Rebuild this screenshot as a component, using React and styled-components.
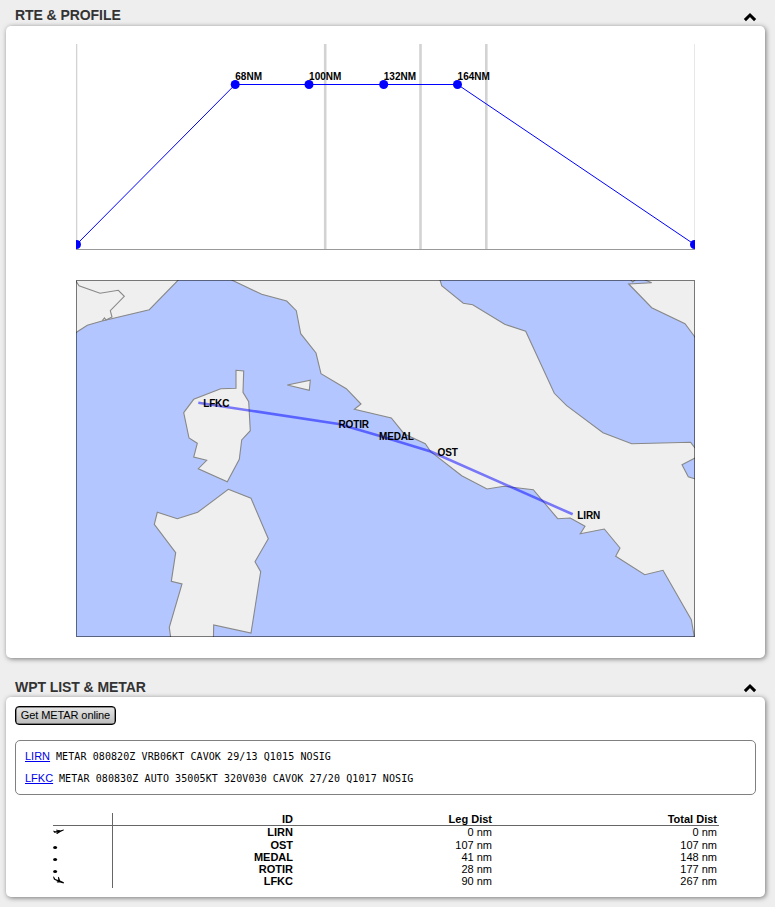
import React from "react";
import styled, { createGlobalStyle } from "styled-components";

const GlobalStyle = createGlobalStyle`
  * { box-sizing: border-box; }
  html, body { margin: 0; background: #eeeeee; }
  body {
    font-family: "Liberation Sans", Arial, sans-serif;
    font-size: 11px;
    color: #000;
  }
`;

const Page = styled.main`
  width: 775px;
  height: 907px;
  padding: 4px 10px 0 6px;
  overflow: hidden;
`;

const Section = styled.section`
  margin-bottom: ${(p) => p.$gap || 0}px;
`;

const SectionHeader = styled.header`
  display: flex;
  justify-content: space-between;
  align-items: center;
  height: ${(p) => p.$height}px;
  padding: 0 8px 0 9px;
`;

const Title = styled.h2`
  margin: 0;
  font-size: 14px;
  line-height: 16px;
  font-weight: bold;
  letter-spacing: -0.07px;
  color: #333;
`;

const Chevron = styled.svg`
  display: block;
  width: 14px;
  height: 10px;
  margin-top: 3px;
`;

const Card = styled.div`
  height: ${(p) => p.$height}px;
  padding: ${(p) => p.$padding};
  background: #fff;
  border-radius: 5px;
  box-shadow: 1px 1px 5px rgba(0, 0, 0, 0.5);
`;

const ProfileChart = styled.svg`
  display: block;
  width: 619px;
  height: 206px;
  margin-bottom: 30px;
`;

const RouteMap = styled.svg`
  display: block;
  width: 619px;
  height: 357px;
`;

const ChartLabel = styled.text`
  font: bold 10px "Liberation Sans", Arial, sans-serif;
  letter-spacing: ${(p) => p.$spacing || 0}px;
  fill: #000;
`;

const MetarButton = styled.button`
  display: block;
  width: 101px;
  height: 19px;
  padding: 1px 0;
  border: 1px solid #000;
  border-radius: 4px;
  background: linear-gradient(#e6e6e6, #bdbdbd);
  box-shadow: inset 0 0 0 0.5px #333;
  font: 11px/15px "Liberation Sans", Arial, sans-serif;
  letter-spacing: -0.1px;
  color: #000;
`;

const MetarBox = styled.div`
  height: 55px;
  margin: 15px 0 18px;
  padding: 4px 9px;
  border: 1px solid #808080;
  border-radius: 5px;
`;

const MetarLine = styled.p`
  margin: 0;
  height: 22px;
  line-height: 22px;
  white-space: pre;
`;

const StationLink = styled.a`
  display: inline-block;
  width: ${(p) => p.$width}px;
  color: #0000ee;
  text-decoration: underline;
`;

const MetarText = styled.code`
  margin-left: 6px;
  font: 10px "DejaVu Sans Mono", monospace;
  letter-spacing: 0.09px;
`;

const WaypointTable = styled.div`
  width: 666px;
  margin-left: 38px;
`;

const WaypointRow = styled.div`
  display: grid;
  grid-template-columns: 60px 182px 199px 225px;
  height: ${(p) => p.$height}px;
  line-height: 12px;
  border-bottom: ${(p) => (p.$head ? "1px solid #666" : "none")};
  font-weight: ${(p) => (p.$head ? "bold" : "normal")};
`;

const Cell = styled.div`
  padding-right: 2px;
  text-align: right;
  font-weight: ${(p) => (p.$bold ? "bold" : "inherit")};
`;

const IconCell = styled.div`
  border-right: 1px solid #666;
`;

const Marker = styled.svg`
  display: block;
  width: 12px;
  height: 12px;
`;

const points = [
  [0.5, 200.5],
  [159.2, 40.5, "68NM"],
  [233, 40.5, "100NM"],
  [307.7, 40.5, "132NM"],
  [381.5, 40.5, "164NM"],
  [618.5, 200.5],
];

const land = [
  "70,336 76.5,332.3 87.3,325.3 102,321 149.3,309.7 178.3,280 178.3,270 70,270",
  "231.7,280 261.7,294.3 286.7,301 296.3,310.7 300.7,333.7 316,353 321,373.7 346.3,388.7 361,404 354.3,409.3 391.3,418 404,433.7 425.3,443.7 430.7,451.7 461.7,475.7 487,489 504,486.3 533.3,489.7 557.7,518.7 570.3,518 585,526.3 580.3,533.7 604.3,529 620,548 615.7,556.3 644.7,574.7 663,570.3 691.3,619.7 694.3,637 700,650 705,481 694.5,478.7 688.3,476.7 682,464.7 694.5,458.3 705,455 694.7,447.7 690.7,442.3 631.7,443.7 603,432.7 566.7,405.7 554.3,393.3 525.7,331.3 504.7,324.3 472.7,304.7 463.3,303.3 441.7,285.7 440,280 440,270 231.7,270",
  "287.3,385 310.3,380.3 309.3,390.3",
  "236,370.3 243.7,371 243,392.3 248.7,401.7 250.3,430.7 241.7,440 239.3,459.3 227.3,481.7 198.3,468.7 206.7,460.3 193.7,457 197.3,443.3 189,438 183.7,412.7 193.7,399.3 220.7,388.7 236,388.3",
  "228.3,489.3 251,498.3 268.3,538.7 255,561.7 260.7,571.7 251,633 213.7,625 213.3,645 171.7,645 169.3,627.3 182,584 171.3,581.3 175.7,552.7 154.3,524.3 157.3,512.3 177.3,518.7 197.7,512.3",
  "628.7,284 651.7,307.7 685,323.7 694.7,336.7 705,350 705,270 645,270 645,280 651.7,282.7",
  "630,279 632.7,282 636,279",
];

const fixes = [
  ["LFKC", 203.2, 407],
  ["ROTIR", 338.5, 428],
  ["MEDAL", 379, 440],
  ["OST", 437.5, 456],
  ["LIRN", 577.3, 519],
];

const metars = [
  ["LIRN", 25, "METAR 080820Z VRB06KT CAVOK 29/13 Q1015 NOSIG"],
  ["LFKC", 28, "METAR 080830Z AUTO 35005KT 320V030 CAVOK 27/20 Q1017 NOSIG"],
];

const waypoints = [
  { id: "LIRN", leg: "0 nm", total: "0 nm", kind: "departure", height: 13 },
  { id: "OST", leg: "107 nm", total: "107 nm", kind: "fix", height: 12 },
  { id: "MEDAL", leg: "41 nm", total: "148 nm", kind: "fix", height: 12 },
  { id: "ROTIR", leg: "28 nm", total: "177 nm", kind: "fix", height: 12 },
  { id: "LFKC", leg: "90 nm", total: "267 nm", kind: "arrival", height: 13 },
];

function WaypointMarker({ kind }) {
  if (kind === "departure") {
    return (
      <Marker viewBox="0 0 12 12">
        <path d="M0.1 4.7 1 4.7 2 5.3 5 5.1 10.8 3.4 10.9 4.3 7.4 5.9 4.2 7.9 3 7.9 4.6 6.4 1.2 6.7Z" fill="#000" />
        <path d="M3.2 4.1 7 4.9" stroke="#000" strokeWidth="1" />
      </Marker>
    );
  }
  if (kind === "arrival") {
    return (
      <Marker viewBox="0 0 12 12">
        <path d="M0 1.5 1 1.8 2.3 3.9 5.2 4.9 5 1.8 6 2.2 7.1 5.5 10.9 7.2 10.7 8.4 7 7.4 4.2 7.6 3.4 6.7 5 6.4 0.9 4.6Z" fill="#000" />
      </Marker>
    );
  }
  return (
    <Marker viewBox="0 0 12 12">
      <ellipse cx="2.1" cy="8.5" rx="2" ry="1.6" fill="#000" />
    </Marker>
  );
}

function Panel({ title, headerHeight, gap, height, padding, children }) {
  return (
    <Section $gap={gap}>
      <SectionHeader $height={headerHeight}>
        <Title>{title}</Title>
        <Chevron viewBox="0 0 14 10">
          <path d="M1.9 8.1 7 3 12.1 8.1" fill="none" stroke="#000" strokeWidth="3" />
        </Chevron>
      </SectionHeader>
      <Card $height={height} $padding={padding}>{children}</Card>
    </Section>
  );
}

export default function App() {
  return (
    <>
      <GlobalStyle />
      <Page>
        <Panel title="RTE & PROFILE" headerHeight={22} gap={18} height={632} padding="18px 0 0 70px">
          <ProfileChart viewBox="0 0 619 206">
            <path d="M0 0V206M249.2 0V206M344.5 0V206M410.3 0V206" stroke="#d3d3d3" strokeWidth="2.6" />
            <path d="M618.5 0V206" stroke="#e8e8e8" />
            <path d="M0 205.5H619" stroke="#999" />
            <polyline points={points.map(([x, y]) => `${x},${y}`).join(" ")} fill="none" stroke="#00f" />
            {points.map(([x, y]) => <circle key={x} cx={x} cy={y} r="4.5" fill="#00f" />)}
            {points.filter((p) => p[2]).map(([x, , label]) => (
              <ChartLabel key={label} x={x + 0.1} y="36">{label}</ChartLabel>
            ))}
          </ProfileChart>
          <RouteMap viewBox="76 280 619 357">
            <rect x="76" y="280" width="619" height="357" fill="#b3c6ff" />
            {land.map((shape) => (
              <polygon key={shape} points={shape} fill="#efefef" stroke="#888" strokeWidth="1.1" />
            ))}
            <polyline points="70,270 76,281 79,285.7 100,293.3 118.3,290.3 124.3,296.3 110.3,310.7 112,317 106,320 104.5,318 102.3,320.7" fill="none" stroke="#888" strokeWidth="1.1" />
            <rect x="76.5" y="280.5" width="618" height="356" fill="none" stroke="#000" strokeOpacity="0.5" />
            <polyline points="198.3,402.7 338.7,424 380,436 430.7,451.5 572.7,514.3" fill="none" stroke="#00f" strokeOpacity="0.5" strokeWidth="2.6" />
            {fixes.map(([id, x, y]) => <ChartLabel key={id} x={x} y={y} $spacing={-0.15}>{id}</ChartLabel>)}
          </RouteMap>
        </Panel>
        <Panel title="WPT LIST & METAR" headerHeight={21} height={200} padding="9px 9px 0">
          <MetarButton>Get METAR online</MetarButton>
          <MetarBox>
            {metars.map(([id, width, text]) => (
              <MetarLine key={id}>
                <StationLink href="#" $width={width}>{id}</StationLink>
                <MetarText>{text}</MetarText>
              </MetarLine>
            ))}
          </MetarBox>
          <WaypointTable>
            <WaypointRow $head $height={13}>
              <IconCell />
              <Cell>ID</Cell>
              <Cell>Leg Dist</Cell>
              <Cell>Total Dist</Cell>
            </WaypointRow>
            {waypoints.map((w) => (
              <WaypointRow key={w.id} $height={w.height}>
                <IconCell><WaypointMarker kind={w.kind} /></IconCell>
                <Cell $bold>{w.id}</Cell>
                <Cell>{w.leg}</Cell>
                <Cell>{w.total}</Cell>
              </WaypointRow>
            ))}
          </WaypointTable>
        </Panel>
      </Page>
    </>
  );
}
